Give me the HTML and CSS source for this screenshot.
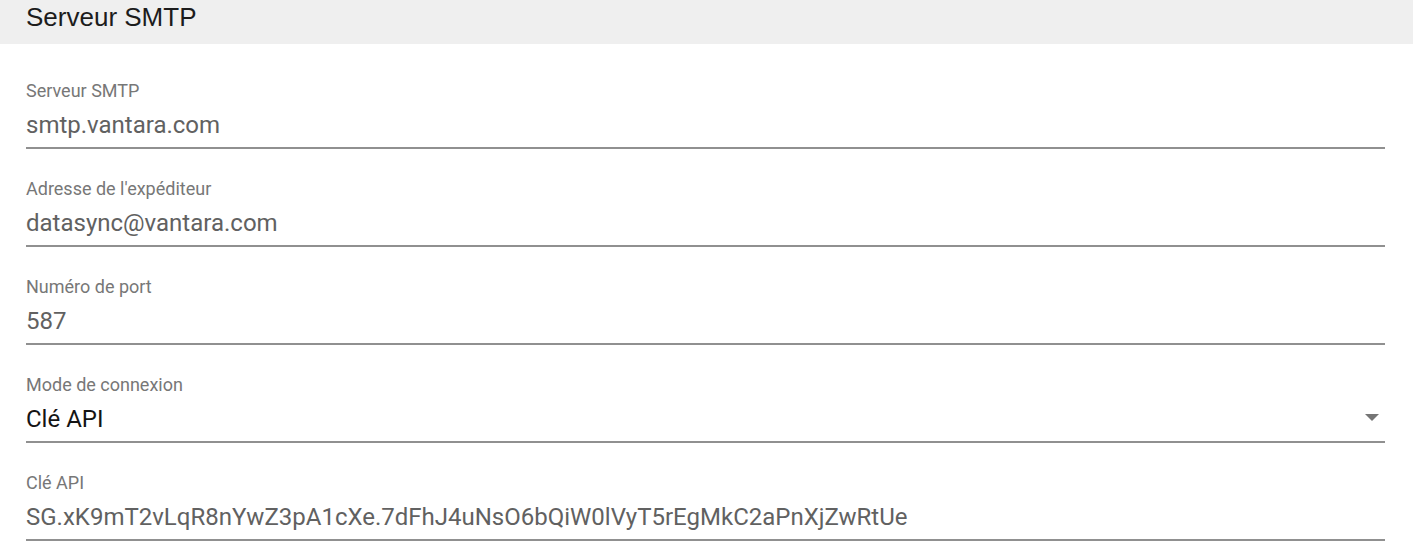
FILE: index.html
```html
<!DOCTYPE html>
<html lang="fr">
<head>
<meta charset="utf-8">
<title>Serveur SMTP</title>
<link rel="stylesheet" href="styles.css">
</head>
<body>
<section class="panel">
  <header class="panel-header">
    <h2 class="panel-title">Serveur SMTP</h2>
  </header>
  <div class="form">
    <div class="field">
      <label class="field-label">Serveur SMTP</label>
      <div class="field-input">
        <span class="field-value">smtp.vantara.com</span>
      </div>
    </div>
    <div class="field">
      <label class="field-label">Adresse de l'expéditeur</label>
      <div class="field-input">
        <span class="field-value">datasync@vantara.com</span>
      </div>
    </div>
    <div class="field">
      <label class="field-label">Numéro de port</label>
      <div class="field-input">
        <span class="field-value">587</span>
      </div>
    </div>
    <div class="field">
      <label class="field-label">Mode de connexion</label>
      <div class="field-input">
        <span class="field-value select-value">Clé API</span>
        <svg class="select-arrow" width="14" height="7" viewBox="0 0 14 7" aria-hidden="true"><path d="M0 0H14L7 7Z" fill="#757575"/></svg>
      </div>
    </div>
    <div class="field">
      <label class="field-label">Clé API</label>
      <div class="field-input">
        <span class="field-value">SG.xK9mT2vLqR8nYwZ3pA1cXe.7dFhJ4uNsO6bQiW0lVyT5rEgMkC2aPnXjZwRtUe</span>
      </div>
    </div>
  </div>
</section>
</body>
</html>
```

FILE: styles.css
```css
html, body {
  margin: 0;
  padding: 0;
  background: #ffffff;
}

.panel {
  width: 1413px;
}

.panel-header {
  height: 44px;
  background: #efefef;
  padding: 0 26px;
  box-sizing: border-box;
}

.panel-title {
  margin: 0;
  font-family: "Liberation Sans", Arial, sans-serif;
  font-weight: 400;
  font-size: 26px;
  line-height: 34px;
  color: #1c1c1c;
}

.form {
  display: flex;
  flex-direction: column;
  gap: 29px;
  padding: 36px 28px 0 26px;
  font-family: Roboto, "Liberation Sans", sans-serif;
}

.field {
  display: flex;
  flex-direction: column;
}

.field-label {
  font-size: 18px;
  line-height: 21px;
  color: #777777;
}

.field-input {
  display: flex;
  align-items: center;
  margin-top: 10px;
  padding-bottom: 8px;
  border-bottom: 2px solid #909090;
}

.field-value {
  flex: 1;
  font-size: 24px;
  line-height: 28px;
  color: #616161;
  white-space: nowrap;
}

.select-value {
  color: #141414;
}

.select-arrow {
  flex: none;
  margin-right: 6px;
  margin-bottom: 3px;
}
```
